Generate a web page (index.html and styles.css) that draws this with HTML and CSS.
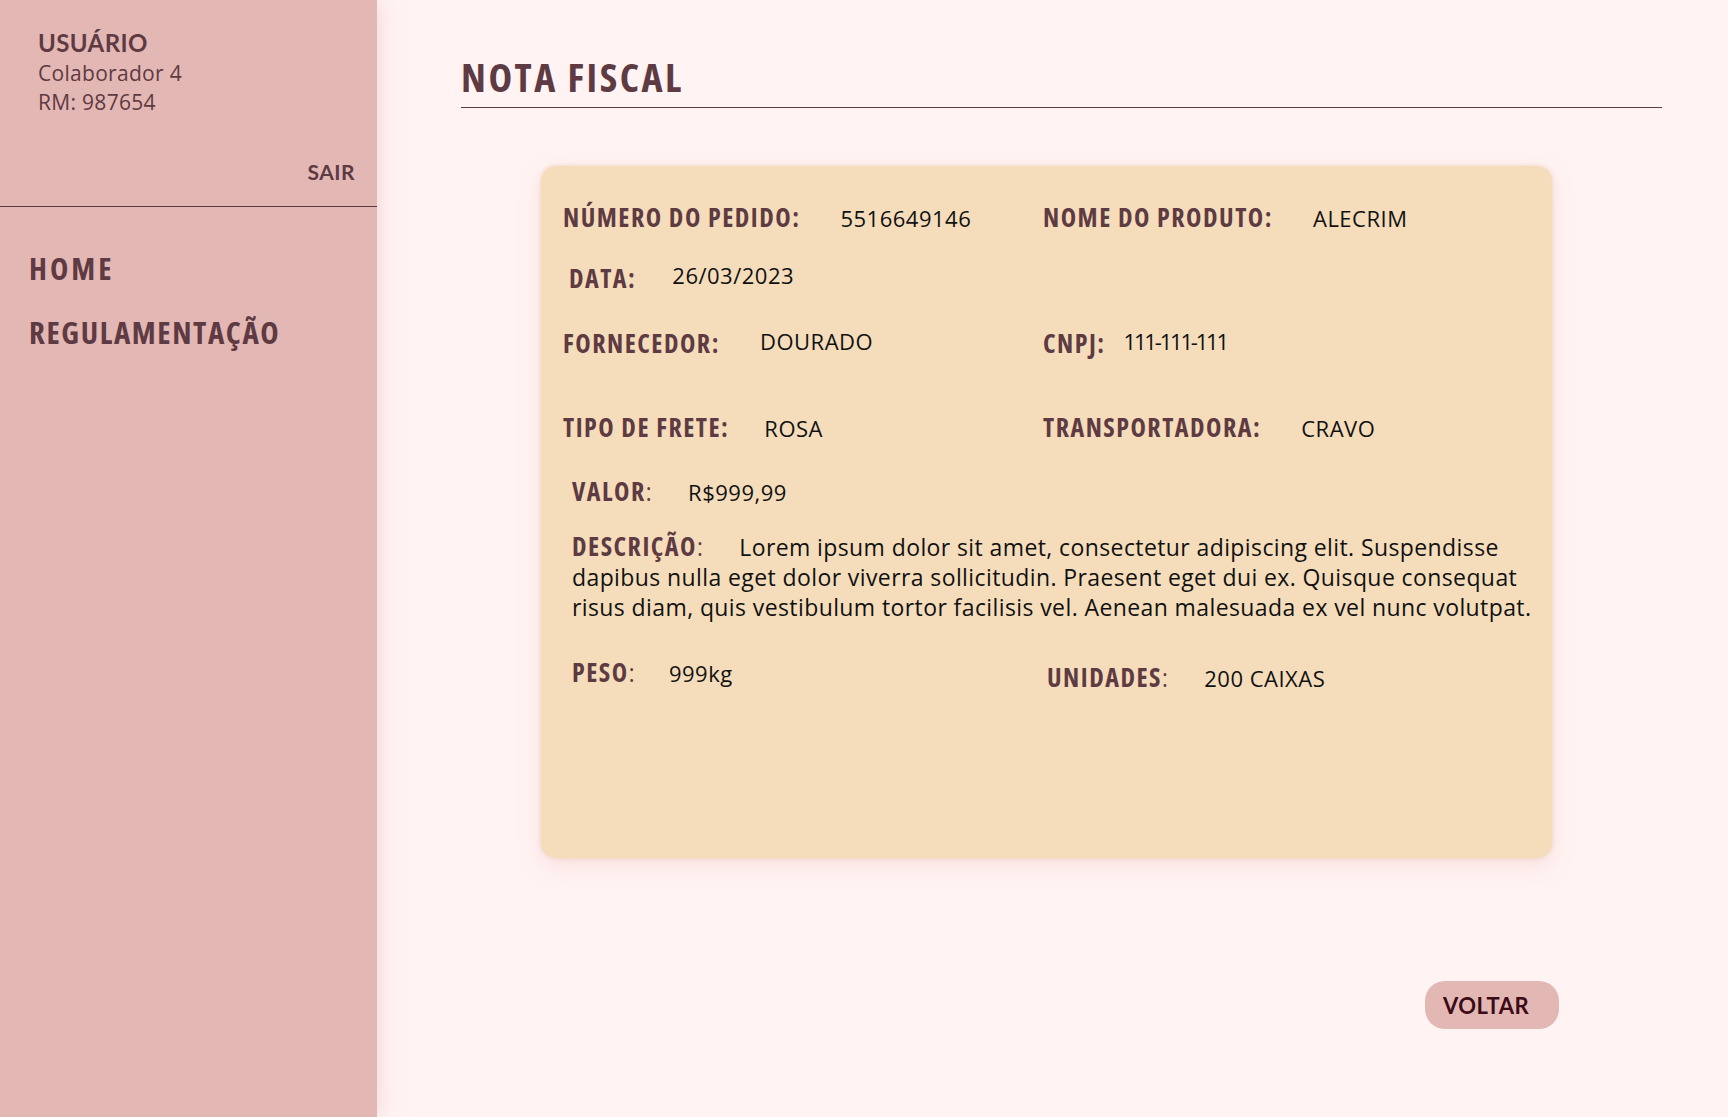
FILE: index.html
```html
<!DOCTYPE html>
<html lang="pt-BR">
<head>
<meta charset="utf-8">
<title>Nota Fiscal</title>
<link rel="stylesheet" href="styles.css">
</head>
<body>
<div class="app">
  <aside class="sidebar">
    <div class="user">
      <div class="user-title">USUÁRIO</div>
      <div class="user-line first">Colaborador 4</div>
      <div class="user-line">RM: 987654</div>
      <div class="logout">SAIR</div>
    </div>
    <nav class="nav">
      <a class="nav-item nav-home" href="#">HOME</a>
      <a class="nav-item" href="#">REGULAMENTAÇÃO</a>
    </nav>
  </aside>
  <main class="main">
    <h1 class="page-title">NOTA FISCAL</h1>
    <section class="card">
      <div class="row row-1">
        <div class="cell"><span class="lab">NÚMERO DO PEDIDO:</span><span class="val">5516649146</span></div>
        <div class="cell"><span class="lab">NOME DO PRODUTO:</span><span class="val">ALECRIM</span></div>
      </div>
      <div class="row row-2">
        <div class="cell cell-data"><span class="lab lab-low lab-data">DATA:</span><span class="val">26/03/2023</span></div>
      </div>
      <div class="row row-3">
        <div class="cell"><span class="lab lab-low3">FORNECEDOR:</span><span class="val">DOURADO</span></div>
        <div class="cell"><span class="lab lab-low3 lab-tight">CNPJ:</span><span class="val val-tight">111-111-111</span></div>
      </div>
      <div class="row row-4">
        <div class="cell"><span class="lab lab-mid">TIPO DE FRETE:</span><span class="val">ROSA</span></div>
        <div class="cell"><span class="lab">TRANSPORTADORA:</span><span class="val">CRAVO</span></div>
      </div>
      <div class="row row-5 inset">
        <div class="cell"><span class="lab lab-mid"><b class="lab-text">VALOR</b><span class="colon">:</span></span><span class="val">R$999,99</span></div>
      </div>
      <p class="desc inset"><span class="lab lab-mid"><b class="lab-text">DESCRIÇÃO</b><span class="colon">:</span></span><span class="desc-text">Lorem ipsum dolor sit amet, consectetur adipiscing elit. Suspendisse dapibus nulla eget dolor viverra sollicitudin. Praesent eget dui ex. Quisque consequat risus diam, quis vestibulum tortor facilisis vel. Aenean malesuada ex vel nunc volutpat.</span></p>
      <div class="row row-7 inset">
        <div class="cell"><span class="lab lab-peso"><b class="lab-text">PESO</b><span class="colon">:</span></span><span class="val">999kg</span></div>
        <div class="cell cell-low"><span class="lab lab-mid"><b class="lab-text">UNIDADES</b><span class="colon">:</span></span><span class="val">200 CAIXAS</span></div>
      </div>
    </section>
    <div class="actions">
      <button class="btn" type="button">VOLTAR</button>
    </div>
  </main>
</div>
</body>
</html>
```
FILE: styles.css
```css
* { box-sizing: border-box; }
html, body { margin: 0; padding: 0; }
body {
  font-family: "Open Sans", Lato, "Liberation Sans", sans-serif;
  background: #fff4f3;
  color: #5e3a42;
  width: 1728px;
  height: 1117px;
  overflow: hidden;
}
.app {
  display: flex;
  height: 1117px;
}
.sidebar {
  width: 377px;
  flex: none;
  background: #e3b7b4;
  box-shadow: 0 0 22px rgba(227, 183, 180, 0.55);
  position: relative;
  z-index: 1;
}
.user {
  padding: 26px 22px 21px 38px;
  border-bottom: 1px solid #5e3a42;
}
.user-title {
  font-family: Lato, "Open Sans", sans-serif;
  font-size: 24px;
  font-weight: 700;
  line-height: 34px;
  letter-spacing: 0.4px;
}
.user-line {
  font-size: 21px;
  line-height: 29px;
  letter-spacing: 0.3px;
}
.user-line.first { margin-top: -1px; }
.logout {
  margin-top: 42px;
  text-align: right;
  font-family: Lato, "Open Sans", sans-serif;
  font-size: 21px;
  font-weight: 700;
  line-height: 26px;
  letter-spacing: 0.5px;
}
.nav {
  display: flex;
  flex-direction: column;
  gap: 24px;
  padding: 41px 0 0 29px;
}
.nav-item {
  color: #5e3a42;
  text-decoration: none;
  font-size: 31px;
  font-weight: 700;
  font-stretch: 75%;
  line-height: 40px;
  letter-spacing: 1.6px;
}
.nav-home { letter-spacing: 3px; }
.main {
  flex: 1;
  padding: 54px 66px 0 84px;
}
.page-title {
  margin: 0;
  font-size: 40px;
  font-weight: 700;
  font-stretch: 75%;
  line-height: 46px;
  padding-bottom: 7px;
  border-bottom: 1px solid #5e3a42;
  letter-spacing: 2.5px;
}
.card {
  margin: 58px 0 0 80px;
  width: 1011px;
  height: 692px;
  background: #f5ddbb;
  border-radius: 15px;
  padding: 36px 17px 0 22px;
  box-shadow: 0 8px 22px rgba(238, 182, 182, 0.35), 0 0 5px rgba(232, 205, 180, 0.7);
}
.row {
  display: grid;
  grid-template-columns: 480px 1fr;
  height: 30px;
  font-size: 24px;
  line-height: 30px;
}
.row-2 { margin-top: 28px; }
.row-3 { margin-top: 36px; }
.row-4 { margin-top: 56px; }
.row-5 { margin-top: 34px; }
.row-7 { margin-top: 35px; grid-template-columns: 475px 1fr; }
.inset { padding-left: 9px; }
.cell { white-space: nowrap; }
.cell-data { padding-left: 6px; }
.cell-low { padding-top: 5px; }
.lab {
  display: inline-block;
  font-size: 26px;
  font-weight: 700;
  font-stretch: 75%;
  letter-spacing: 1.5px;
  color: #5e3a42;
  margin-right: 40px;
}
.lab-text { font-weight: 700; }
.colon { font-weight: 400; }
.lab-low { vertical-align: -4px; }
.lab-low3 { vertical-align: -3px; }
.lab-data { margin-right: 36px; }
.lab-tight { margin-right: 18px; }
.lab-mid { margin-right: 35px; }
.lab-peso { margin-right: 33px; }
.val {
  font-size: 22px;
  color: #111;
  letter-spacing: 0.5px;
}
.val-tight { letter-spacing: -2.2px; }
.desc {
  margin: 25px 0 0 0;
  font-size: 23px;
  line-height: 30px;
  color: #111;
  letter-spacing: 0.4px;
}
.actions {
  margin-top: 123px;
  padding-left: 964px;
}
.btn {
  width: 134px;
  height: 48px;
  border: none;
  border-radius: 20px;
  background: #e3b7b4;
  color: #3b0b16;
  font-family: Lato, "Open Sans", sans-serif;
  font-size: 22px;
  font-weight: 700;
  text-align: left;
  padding: 0 0 0 18px;
  letter-spacing: 0.5px;
}
```
